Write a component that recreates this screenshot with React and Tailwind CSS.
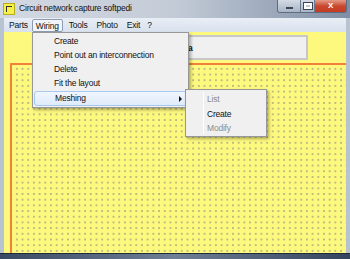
export default function App() {
    const font = { fontFamily: '"Liberation Sans", Arial, sans-serif' };

    return (
        <div className="relative w-[350px] h-[259px] overflow-hidden bg-[#b8c3d2] flex flex-col tracking-[-0.2px]" style={font}>
            {/* title bar */}
            <div className="h-[18px] flex items-start bg-gradient-to-r from-[#d3d9e2] via-[#c3cbd7] to-[#7f8ea5]">
                <div className="ml-[3px] mt-[3px] w-[12px] h-[12px] bg-[#f6f04a] border border-[#b5ae20] flex items-center justify-center">
                    <div className="w-[6px] h-[6px] border-t border-l border-[#333]" />
                </div>
                <span className="ml-[4px] mt-[3px] text-[8.5px] leading-[11px] text-[#111]">Circuit network capture softpedi</span>
                <div className="ml-auto mr-[3px] flex h-[13px] rounded-b-[3px] border border-t-0 border-[#5d6c83] overflow-hidden">
                    <div className="w-[23px] flex items-center justify-center bg-gradient-to-b from-[#d4dbe5] to-[#a8b4c5] border-r border-[#6d7b91]">
                        <div className="w-[7px] h-[2px] mt-[3px] bg-white border border-[#3c4658]" />
                    </div>
                    <div className="w-[14px] flex items-center justify-center bg-gradient-to-b from-[#d4dbe5] to-[#a8b4c5] border-r border-[#6d7b91]">
                        <div className="w-[8px] h-[6px] border-2 border-white outline outline-1 outline-[#3c4658]" />
                    </div>
                    <div className="w-[31px] flex items-center justify-center bg-gradient-to-b from-[#e39a88] via-[#c8472e] to-[#c43c22] text-white text-[8px] font-bold leading-none">
                        X
                    </div>
                </div>
            </div>

            <div className="flex-1 flex flex-col mx-[4px] mb-[6px]">
                {/* menu bar */}
                <div className="h-[14px] flex items-center text-[8.5px] text-[#111] bg-gradient-to-b from-[#e9eef6] to-[#d9e1ee]">
                    <span className="ml-[5px]">Parts</span>
                    <span className="ml-[4px] px-[3px] h-[13px] leading-[12px] border border-[#8f9cb2] rounded-[2px] bg-[#f1f4f9]">Wiring</span>
                    <span className="ml-[6px]">Tools</span>
                    <span className="ml-[9px]">Photo</span>
                    <span className="ml-[9px]">Exit</span>
                    <span className="ml-[7px]">?</span>
                </div>

                {/* client area */}
                <div className="flex-1 flex flex-col bg-[#fdf97e]">
                    <div className="h-[31px] pt-[3px] pl-[36px] pr-[38px]">
                        <div className="h-[25px] bg-[#f0f0f0] border-2 border-[#c8c8c8] pl-[146px] pt-[5px] text-[8.5px] font-bold text-[#111]">
                            a
                        </div>
                    </div>
                    <div className="flex-1 ml-[6px] border-l-2 border-t-2 border-[#f3803a] bg-[radial-gradient(circle,#8e8c82_0.5px,transparent_0.9px)] bg-[length:5.7px_5.7px] bg-[position:2px_1px]" />
                </div>
            </div>

            {/* bottom frame */}
            <div className="absolute left-0 right-0 bottom-0 h-[6px] bg-gradient-to-r from-[#3a4a63] via-[#6f7f96] to-[#34445c] border-t border-[#1f2a3b]" />

            {/* wiring dropdown */}
            <div className="absolute left-[32px] top-[32px] w-[157px] h-[76px] bg-[#f0f0f0] border border-[#979797] shadow-[2px_2px_3px_rgba(0,0,0,0.3)] text-[8.5px] text-[#111] pt-[1px]">
                <div className="h-[14px] leading-[14px] pl-[21px]">Create</div>
                <div className="h-[14px] leading-[14px] pl-[21px]">Point out an interconnection</div>
                <div className="h-[14px] leading-[14px] pl-[21px]">Delete</div>
                <div className="h-[14px] leading-[14px] pl-[21px]">Fit the layout</div>
                <div className="relative h-[15px] mx-[1px] mt-[1px] leading-[13px] pl-[20px] border border-[#a8c8ee] rounded-[3px] bg-gradient-to-b from-[#f1f6fd] to-[#dfeafa]">
                    Meshing
                    <span className="absolute right-[4px] top-[4px] w-0 h-0 border-y-[3px] border-y-transparent border-l-[3px] border-l-[#111]" />
                </div>
            </div>

            {/* meshing submenu */}
            <div className="absolute left-[185px] top-[89px] w-[82px] h-[48px] bg-[#f0f0f0] border border-[#979797] shadow-[2px_2px_3px_rgba(0,0,0,0.3)] text-[8.5px] pt-[2px]">
                <div className="absolute left-[17px] top-[2px] bottom-[2px] w-px bg-[#e2e2e2] border-r border-white" />
                <div className="h-[14.5px] leading-[14px] pl-[21px] text-[#8d8d8d]">List</div>
                <div className="h-[14.5px] leading-[14px] pl-[21px] text-[#111]">Create</div>
                <div className="h-[14.5px] leading-[14px] pl-[21px] text-[#8d8d8d]">Modify</div>
            </div>
        </div>
    );
}
